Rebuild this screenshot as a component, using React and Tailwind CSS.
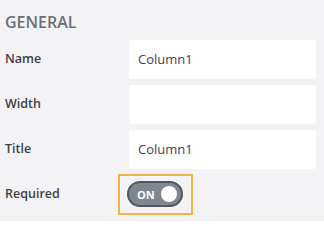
import React from 'react';

const font = { fontFamily: '"Open Sans", "Noto Sans", sans-serif' };

function TextRow({ label, value }) {
    return (
        <div className="flex items-center">
            <div className="w-[124px] text-[12.5px] font-semibold text-[#3d4045]">{label}</div>
            <div className="flex-1 h-[39px] bg-white rounded-[3px] flex items-center px-[9px] text-[13px] text-[#404347]">{value}</div>
        </div>
    );
}

export default function App() {
    return (
        <div className="w-[324px] h-[221px] bg-[#f3f3f5] pl-[5px] pr-[8px] overflow-hidden" style={font}>
            <div className="pt-[10px] h-[40px] text-[16px] font-semibold text-[#6b6f76]">GENERAL</div>
            <div className="flex flex-col gap-[6px]">
                <TextRow label="Name" value="Column1" />
                <TextRow label="Width" value="" />
                <TextRow label="Title" value="Column1" />
                <div className="flex items-center -mt-[1px]">
                    <div className="w-[113px] text-[12.5px] font-semibold text-[#3d4045]">Required</div>
                    <div className="border-2 border-[#f0b24a] pl-[7px] pr-[8px] pt-[5px] pb-[6px]">
                        <div className="w-[56px] h-[26px] rounded-full bg-[#7d8791] border-[2.5px] border-[#4f5863] flex items-center justify-between pl-[8px] pr-[4px]">
                            <span className="text-[11px] font-bold text-white leading-none">ON</span>
                            <span className="w-[16px] h-[16px] rounded-full bg-white"></span>
                        </div>
                    </div>
                </div>
            </div>
        </div>
    );
}
